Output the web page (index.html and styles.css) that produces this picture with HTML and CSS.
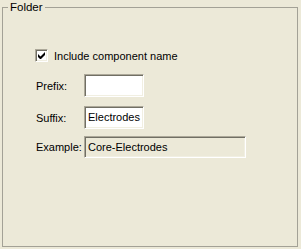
FILE: index.html
```html
<!DOCTYPE html>
<html lang="en">
<head>
<meta charset="UTF-8" />
<title>Folder</title>
<link rel="stylesheet" href="styles.css">
</head>
<body>
  <fieldset class="group">
    <legend>Folder</legend>

    <label class="check-row">
      <span class="checkbox">
        <svg width="7" height="7" viewBox="0 0 7 7"><path d="M0 2v3l2 2h1l4-4V0L2.5 4.5z" fill="#000"/></svg>
      </span>
      <span>Include component name</span>
    </label>

    <div class="fields">
      <span class="field-label">Prefix:</span>
      <span class="textbox short"></span>

      <span class="field-label">Suffix:</span>
      <span class="textbox short">Electrodes</span>

      <span class="field-label last">Example:</span>
      <span class="textbox readonly last">Core-Electrodes</span>
    </div>
  </fieldset>
</body>
</html>
```

FILE: styles.css
```css
* {
  box-sizing: border-box;
}
body {
  margin: 0;
  background: #ece9d8;
  font-family: "Liberation Sans", Arial, sans-serif;
  font-size: 11px;
  color: #000;
}

/* Group box */
.group {
  margin: 1px 0 0 2px;
  width: 296px;
  height: 246px;
  border: 1px solid #a3a196;
  padding: 36px 0 0 32px;
}
.group legend {
  padding: 0 2px;
  margin-left: -27px;
  line-height: 12px;
  font-size: 11.5px;
}

/* Checkbox row */
.check-row {
  display: flex;
  align-items: center;
  gap: 6px;
  height: 13px;
}
.checkbox {
  width: 13px;
  height: 13px;
  background: #fff;
  border-top: 1px solid #aca899;
  border-left: 1px solid #aca899;
  border-right: 1px solid #fff;
  border-bottom: 1px solid #fff;
  box-shadow: inset 1px 1px #716f64, inset -1px -1px #f1efe2;
  display: flex;
  align-items: center;
  justify-content: center;
}

/* Label + box grid */
.fields {
  display: grid;
  grid-template-columns: 48px auto;
  row-gap: 9px;
  align-items: center;
  justify-items: start;
  margin-top: 12px;
  padding-left: 1px;
}
.fields .last {
  margin-top: -2px;
}
.field-label {
  white-space: nowrap;
}
.textbox {
  height: 23px;
  border-top: 1px solid #aca899;
  border-left: 1px solid #aca899;
  border-right: 1px solid #fff;
  border-bottom: 1px solid #fff;
  box-shadow: inset 1px 1px #716f64, inset -1px -1px #f1efe2;
  background: #fff;
  padding: 0 3px;
  line-height: 21px;
  white-space: nowrap;
}
.short {
  width: 60px;
}
.readonly {
  width: 162px;
  height: 22px;
  line-height: 20px;
  background: #ece9d8;
}
```
